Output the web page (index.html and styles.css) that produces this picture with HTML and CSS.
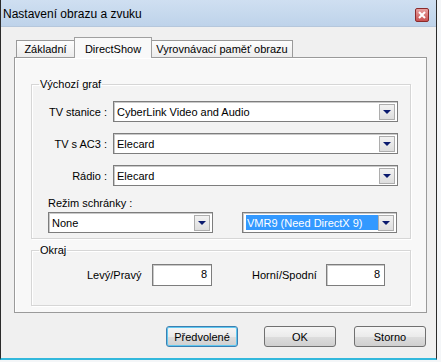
FILE: index.html
```html
<!DOCTYPE html>
<html lang="cs">
<head>
<meta charset="utf-8">
<title>Nastavení obrazu a zvuku</title>
<link rel="stylesheet" href="styles.css">
</head>
<body>
<div class="screen">
  <div class="window">
    <div class="titlebar">
      <span class="title">Nastavení obrazu a zvuku</span>
      <span class="close">
        <svg width="8" height="8" viewBox="0 0 8 8"><path d="M1 1 L7 7 M7 1 L1 7" stroke="#fff" stroke-width="2"/></svg>
      </span>
    </div>
    <div class="body">
      <div class="tabs">
        <div class="tab t1">Základní</div>
        <div class="tab t2 active">DirectShow</div>
        <div class="tab t3">Vyrovnávací paměť obrazu</div>
      </div>
      <div class="panel">
        <fieldset class="group graph">
          <legend>Výchozí graf</legend>
          <div class="rows">
            <label class="lbl">TV stanice :</label>
            <div class="combo wide"><span class="val">CyberLink Video and Audio</span><span class="arrow"></span></div>
            <label class="lbl">TV s AC3 :</label>
            <div class="combo wide"><span class="val">Elecard</span><span class="arrow"></span></div>
            <label class="lbl">Rádio :</label>
            <div class="combo wide"><span class="val">Elecard</span><span class="arrow"></span></div>
          </div>
          <div class="clip-label">Režim schránky :</div>
          <div class="clip-row">
            <div class="combo none"><span class="val">None</span><span class="arrow"></span></div>
            <div class="combo vmr"><span class="val sel">VMR9 (Need DirectX 9)</span><span class="arrow"></span></div>
          </div>
        </fieldset>
        <fieldset class="group margins">
          <legend>Okraj</legend>
          <div class="margin-row">
            <label class="mlbl l1">Levý/Pravý</label>
            <div class="edit e1">8</div>
            <label class="mlbl l2">Horní/Spodní</label>
            <div class="edit e2">8</div>
          </div>
        </fieldset>
      </div>
      <div class="buttons">
        <button class="btn focus">Předvolené</button>
        <button class="btn ok">OK</button>
        <button class="btn cancel">Storno</button>
      </div>
    </div>
  </div>
</div>
</body>
</html>
```

FILE: styles.css
```css
* { box-sizing: border-box; }
html, body { margin: 0; padding: 0; }
body {
  font-family: "Liberation Sans", Arial, sans-serif;
  font-size: 11px;
  color: #000;
  background: #f2f2f2;
}
.screen {
  width: 441px;
  height: 362px;
  background: #f4f6f8;
  overflow: hidden;
}
.window {
  width: 437px;
  height: 360px;
  border-left: 1px solid #2b2b2b;
  border-right: 1px solid #2b2b2b;
  border-bottom: 2px solid #32b8dc;
  background: #f0f0f0;
  display: flex;
  flex-direction: column;
}
.titlebar {
  height: 27px;
  flex: none;
  display: flex;
  align-items: center;
  justify-content: space-between;
  padding: 0 7px 0 2px;
  background: linear-gradient(#cfdff1, #bed3ea);
  border-bottom: 1px solid #b5c7dc;
}
.title {
  font-size: 12px;
  padding-top: 2px;
}
.close {
  width: 14px;
  height: 14px;
  border: 1px solid #8b2a2a;
  border-radius: 2px;
  background: linear-gradient(#e8a0a0, #c85050);
  display: flex;
  align-items: center;
  justify-content: center;
  margin-top: 3px;
}
.body {
  flex: 1;
  padding: 10px 9px 0 13px;
  display: flex;
  flex-direction: column;
}
.tabs {
  height: 21px;
  display: flex;
  align-items: flex-end;
  padding-left: 2px;
  position: relative;
  z-index: 1;
  margin-bottom: -1px;
}
.tab {
  height: 17px;
  margin-bottom: 1px;
  border: 1px solid #9a9a9a;
  border-bottom: none;
  background: linear-gradient(#fdfdfd, #ececec);
  text-align: center;
  padding-top: 2px;
  line-height: 13px;
  white-space: nowrap;
  flex: none;
}
.t1 { width: 58px; border-right: none; }
.t2 { width: 78px; }
.t3 { width: 141px; border-left: none; }
.tab.active {
  height: 21px;
  margin-bottom: 0;
  background: #f9f9f9;
  padding-top: 5px;
  border-color: #a0a0a0;
}
.panel {
  width: 413px;
  height: 256px;
  border: 1px solid #9a9a9a;
  background: #f8f8f8;
  box-shadow: inset 1px 1px 0 #fff;
  padding: 20px 0 0 16px;
}
.group {
  width: 380px;
  margin: 0;
  padding: 0;
  border: 1px solid #d6d6d6;
  box-shadow: 1px 1px 0 #fff inset, 1px 1px 0 #fff;
  background: #f3f3f3;
}
.group legend {
  margin-left: 7px;
  padding: 0 1px;
  line-height: 13px;
}
.graph { height: 161px; }
.rows {
  display: grid;
  grid-template-columns: 76px 285px;
  column-gap: 5px;
  row-gap: 11px;
  margin-top: 10px;
}
.lbl {
  text-align: right;
  align-self: center;
  padding-right: 1px;
}
.combo {
  height: 21px;
  border: 1px solid #7d7d7d;
  box-shadow: inset 1px 1px 0 #c9c9c9;
  background: #fff;
  display: flex;
  align-items: center;
  justify-content: space-between;
  padding: 0 2px 0 3px;
}
.val { padding-top: 1px; }
.arrow {
  width: 16px;
  height: 16px;
  border: 1px solid #adadad;
  background: linear-gradient(#f2f2f2, #dedede);
  display: flex;
  align-items: center;
  justify-content: center;
}
.arrow::after {
  content: "";
  width: 0;
  height: 0;
  border-left: 4px solid transparent;
  border-right: 4px solid transparent;
  border-top: 4px solid #0a1a6e;
}
.clip-label {
  margin: 11px 0 0 16px;
  line-height: 13px;
}
.clip-row {
  display: flex;
  margin: 2px 0 0 16px;
  gap: 29px;
}
.none { width: 165px; }
.vmr { width: 155px; }
.sel {
  background: #3399ff;
  color: #fff;
  width: 133px;
  padding: 2px 0 1px 1px;
}
.margins {
  height: 62px;
  margin-top: 5px;
}
.margin-row {
  display: flex;
  align-items: center;
  margin-top: 7px;
}
.mlbl { line-height: 13px; white-space: nowrap; }
.l1 { margin-left: 55px; width: 53px; text-align: right; }
.l2 { margin-left: 40px; width: 64px; }
.edit {
  height: 22px;
  border: 1px solid #7d7d7d;
  box-shadow: inset 1px 1px 0 #c9c9c9;
  background: #fff;
  text-align: right;
  padding: 3px 4px 0 0;
}
.e1 { width: 60px; margin-left: 12px; }
.e2 { width: 59px; margin-left: 10px; }
.buttons {
  display: flex;
  padding: 13px 0 0 152px;
}
.btn {
  font-family: "Liberation Sans", Arial, sans-serif;
  font-size: 11px;
  height: 21px;
  width: 72px;
  padding: 0;
  border: 1px solid #707070;
  border-radius: 3px;
  background: linear-gradient(#f6f6f6 0%, #ebebeb 50%, #dddddd 51%, #cfcfcf 100%);
  color: #000;
}
.btn.focus {
  border-color: #3c7fb1;
  box-shadow: inset 0 0 0 1px #60c8f0;
}
.ok { margin-left: 26px; }
.cancel { margin-left: 18px; }
```
